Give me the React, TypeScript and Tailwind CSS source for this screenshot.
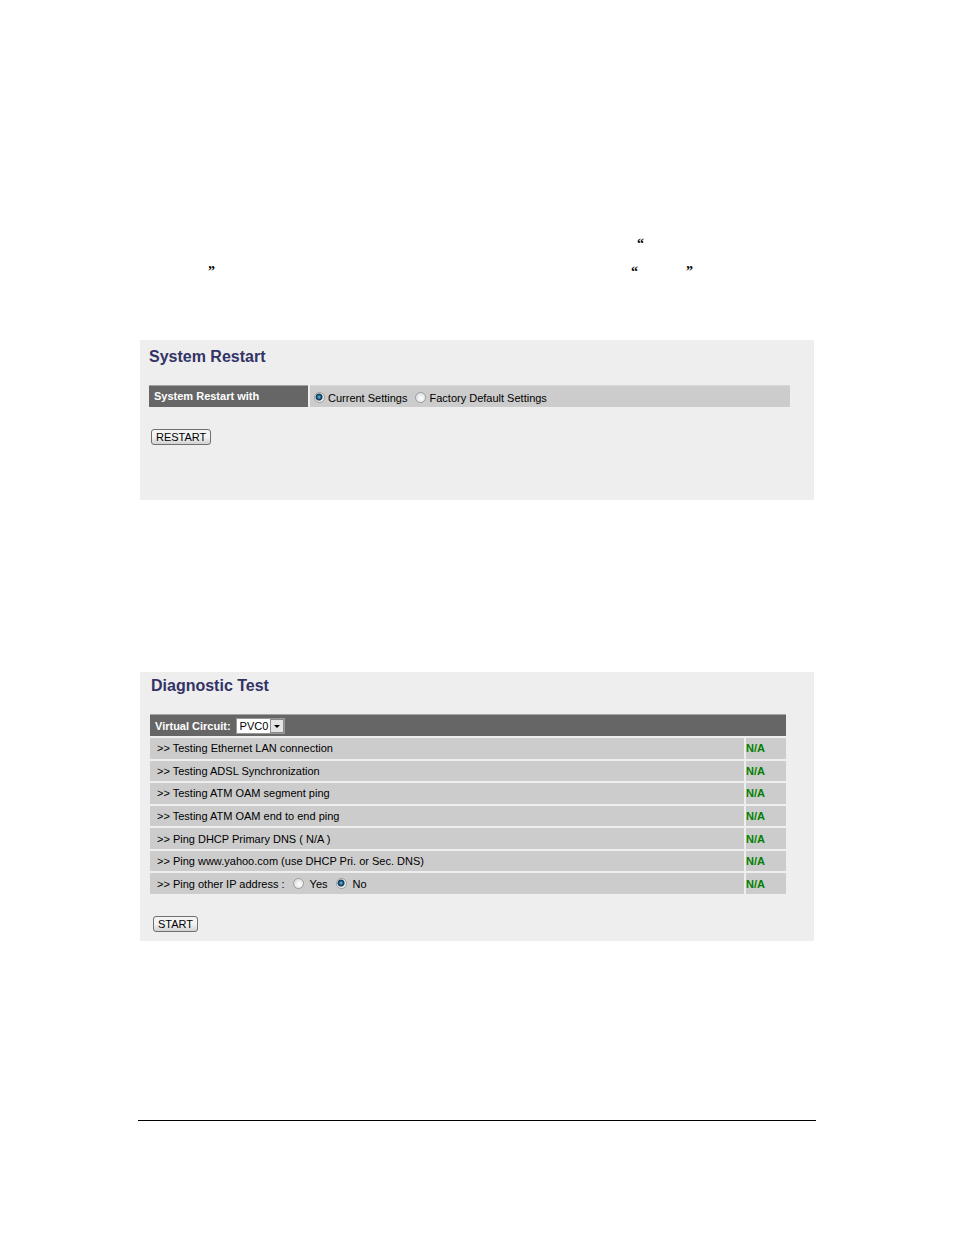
import React, { useState } from 'react';

const tests = [
  'Testing Ethernet LAN connection',
  'Testing ADSL Synchronization',
  'Testing ATM OAM segment ping',
  'Testing ATM OAM end to end ping',
  'Ping DHCP Primary DNS ( N/A )',
  'Ping www.yahoo.com (use DHCP Pri. or Sec. DNS)',
];

type RadioProps = {
  name: string;
  label: string;
  checked: boolean;
  onChange: () => void;
  gap?: string;
};

const Radio = ({ name, label, checked, onChange, gap = 'gap-[3px]' }: RadioProps) => (
  <label className={`flex items-center ${gap}`}>
    <input
      type="radio"
      name={name}
      checked={checked}
      onChange={onChange}
      className="size-[11px] shrink-0 appearance-none rounded-full border border-[#9c9d9d] bg-[radial-gradient(circle_at_60%_60%,#ffffff,#d2d5d8)] checked:bg-[radial-gradient(circle_at_45%_45%,#6cc4e6_0px,#1d5a80_2px,#12344f_3px,#f0f0f0_4px)]"
    />
    <span>{label}</span>
  </label>
);

const PushButton = ({ children }: { children: React.ReactNode }) => (
  <button
    type="button"
    className="h-4 rounded-[3px] border border-[#707070] bg-linear-to-b from-[#f3f3f3] from-50% to-[#d2d2d2] px-1 text-[11px] leading-[14px] text-black"
  >
    {children}
  </button>
);

const SystemRestart = () => {
  const [mode, setMode] = useState('current');

  return (
    <section className="mx-0.5 h-40 bg-[#eeeeee] pl-[9px] pr-6 pt-[7px]">
      <h2 className="text-base leading-5 font-bold text-[#333366]">System Restart</h2>
      <div className="mt-[18px] flex h-[22px] gap-0.5">
        <div className="w-[159px] border-t border-[#a3a3a3] bg-[#666666] pl-[5px] leading-5 font-bold text-white">
          System Restart with
        </div>
        <div className="flex flex-1 items-center gap-2 border-t border-[#d8d8d8] bg-[#cccccc] pl-1 pt-0.5">
          <Radio name="restart" label="Current Settings" checked={mode === 'current'} onChange={() => setMode('current')} />
          <Radio name="restart" label="Factory Default Settings" checked={mode === 'factory'} onChange={() => setMode('factory')} />
        </div>
      </div>
      <div className="mt-[22px] flex pl-0.5">
        <PushButton>RESTART</PushButton>
      </div>
    </section>
  );
};

const DiagnosticTest = () => {
  const [pingOther, setPingOther] = useState(false);

  return (
    <section className="mx-0.5 h-[269px] bg-[#eeeeee] pl-2 pr-[26px] pt-1">
      <h2 className="pl-[3px] text-base leading-5 font-bold text-[#333366]">Diagnostic Test</h2>
      <table className="mt-4 h-[184px] w-full border-separate border-spacing-0.5">
        <thead>
          <tr className="h-[22px]">
            <th colSpan={2} className="border-t border-[#a3a3a3] bg-[#666666] p-0 pl-[5px] text-left font-bold text-white">
              <div className="flex items-center gap-[5px]">
                <label htmlFor="circuit">Virtual Circuit:</label>
                <span className="relative flex">
                  <select
                    id="circuit"
                    className="h-4 w-[49px] appearance-none border border-[#999999] bg-white pl-[3px] text-[11px] leading-[14px] font-normal text-black"
                  >
                    <option>PVC0</option>
                    <option>PVC1</option>
                  </select>
                  <svg className="pointer-events-none absolute right-px top-px" width="14" height="14" viewBox="0 0 14 14">
                    <rect x="0.5" y="0.5" width="13" height="13" fill="#e4e4e4" stroke="#8a8a8a" />
                    <path d="M4 6h6L7 9z" fill="#000" />
                  </svg>
                </span>
              </div>
            </th>
          </tr>
        </thead>
        <tbody>
          {tests.map((test) => (
            <tr key={test}>
              <td className="bg-[#cccccc] p-0 pl-[7px]">&gt;&gt; {test}</td>
              <td className="w-10 bg-[#cccccc] p-0 font-bold text-[#008000]">N/A</td>
            </tr>
          ))}
          <tr>
            <td className="bg-[#cccccc] p-0 pl-[7px]">
              <div className="flex items-center gap-2">
                <span>&gt;&gt; Ping other IP address :</span>
                <Radio name="ping" label="Yes" gap="gap-1.5" checked={pingOther} onChange={() => setPingOther(true)} />
                <Radio name="ping" label="No" gap="gap-1.5" checked={!pingOther} onChange={() => setPingOther(false)} />
              </div>
            </td>
            <td className="w-10 bg-[#cccccc] p-0 font-bold text-[#008000]">N/A</td>
          </tr>
        </tbody>
      </table>
      <div className="mt-5 flex pl-[5px]">
        <PushButton>START</PushButton>
      </div>
    </section>
  );
};

export default function App() {
  return (
    <main className="min-h-screen bg-white px-[138px] pt-[230px] font-['Liberation_Sans',Arial,sans-serif] text-[11px] leading-4 text-black">
      {/* Body copy, only the quotation marks are inked */}
      <div className="font-['Liberation_Serif',serif] text-sm leading-7 font-bold">
        <p className="pl-[499px]">“</p>
        <p className="flex pl-[70px]">
          <span className="w-[423px]">”</span>
          <span className="w-[55px]">“</span>
          <span>”</span>
        </p>
      </div>

      <div className="mt-[54px]">
        <SystemRestart />
      </div>
      <div className="mt-[172px]">
        <DiagnosticTest />
      </div>

      <hr className="mt-[179px] border-t border-black" />
    </main>
  );
}
